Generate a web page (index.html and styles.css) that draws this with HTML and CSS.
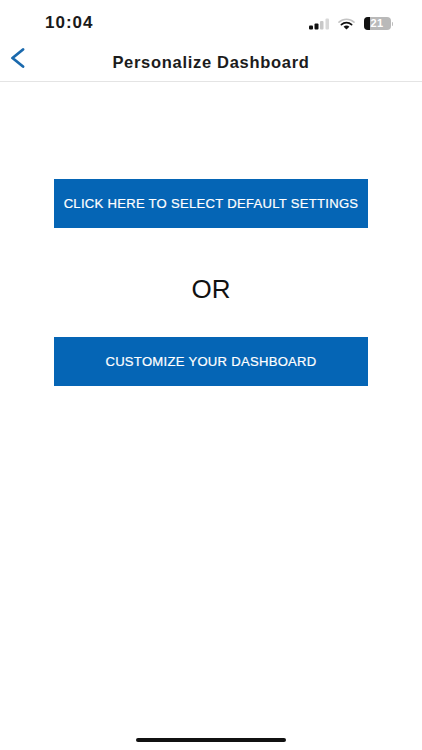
FILE: index.html
```html
<!DOCTYPE html>
<html lang="en">
<head>
<meta charset="utf-8">
<title>Personalize Dashboard</title>
<link rel="stylesheet" href="styles.css">
</head>
<body>
<div class="screen">
  <div class="status">
    <span class="time">10:04</span>
    <div class="status-icons">
      <svg class="signal" width="21" height="12" viewBox="0 0 21 12">
        <rect x="0" y="7.5" width="4" height="4" rx="1" fill="#111"/>
        <rect x="5.5" y="5.5" width="4" height="6" rx="1" fill="#111"/>
        <rect x="11" y="3" width="3.5" height="8.5" rx="1" fill="#c8c8c8"/>
        <rect x="16.5" y="0.5" width="3.5" height="11" rx="1" fill="#d8d8d8"/>
      </svg>
      <svg class="wifi" width="17" height="12" viewBox="0 0 17 12">
        <path d="M1 4.2a11 11 0 0 1 15 0" fill="none" stroke="#c4c4c4" stroke-width="1.6" stroke-linecap="round"/>
        <path d="M3.4 6.6a7.4 7.4 0 0 1 10.2 0" fill="none" stroke="#111" stroke-width="1.7" stroke-linecap="round"/>
        <path d="M5.6 8.8a4 4 0 0 1 5.8 0L8.5 11.6z" fill="#111"/>
      </svg>
      <div class="battery">
        <div class="battery-body"><span class="battery-fill"></span><span class="battery-num">21</span></div>
        <span class="battery-cap"></span>
      </div>
    </div>
  </div>
  <header class="nav">
    <svg class="back" width="15" height="20" viewBox="0 0 15 20">
      <path d="M13 1.5 2.5 10 13 18.5" fill="none" stroke="#1a69ad" stroke-width="2.8" stroke-linecap="round" stroke-linejoin="round"/>
    </svg>
    <h1 class="title">Personalize Dashboard</h1>
  </header>
  <main class="content">
    <button class="action">CLICK HERE TO SELECT DEFAULT SETTINGS</button>
    <p class="or">OR</p>
    <button class="action">CUSTOMIZE YOUR DASHBOARD</button>
  </main>
  <div class="home-indicator"></div>
</div>
</body>
</html>
```
FILE: styles.css
```css
* { box-sizing: border-box; }
html, body { margin: 0; padding: 0; background: #fff; }
body { font-family: "Liberation Sans", Arial, sans-serif; color: #111; }
.screen { width: 422px; height: 750px; display: flex; flex-direction: column; overflow: hidden; }
.status { height: 44px; padding: 14px 29px 0 45px; display: flex; justify-content: space-between; align-items: flex-start; }
.time { font-size: 17px; line-height: 18px; font-weight: 700; letter-spacing: 1px; color: #1a1a1a; }
.status-icons { display: flex; align-items: center; gap: 8px; padding-top: 3px; }
.battery { display: flex; align-items: center; gap: 1px; margin-left: 1px; }
.battery-body { position: relative; width: 27px; height: 13px; border-radius: 4px; background: #b9b9b9; overflow: hidden; }
.battery-fill { position: absolute; left: 0; top: 0; bottom: 0; width: 6px; background: #111; }
.battery-num { position: absolute; left: 0; right: 0; top: 0; text-align: center; font-size: 11px; line-height: 13px; font-weight: 700; color: #fff; letter-spacing: 0.5px; }
.battery-cap { width: 1.5px; height: 4px; border-radius: 0 1px 1px 0; background: #bdbdbd; }
.nav { height: 38px; border-bottom: 1px solid #e4e4e4; display: flex; align-items: center; justify-content: center; position: relative; padding-bottom: 1px; }
.back { position: absolute; left: 10px; top: 4px; }
.title { margin: 0; font-size: 16.5px; line-height: 20px; font-weight: 700; letter-spacing: 0.7px; color: #1c1c1c; }
.content { flex: 1; display: flex; flex-direction: column; align-items: center; padding-top: 97px; }
.action { width: 313.5px; height: 49px; border: 0; padding: 0; background: #0565b5; color: #fff; font-family: inherit; font-size: 13.1px; font-weight: 400; letter-spacing: 0.27px; -webkit-text-stroke: 0.2px #fff; }
.or { margin: 0; height: 109px; padding-top: 13px; display: flex; align-items: center; justify-content: center; font-size: 26px; color: #111; }
.home-indicator { width: 150px; height: 4px; border-radius: 2px; background: #111; margin: 0 auto 8px; flex: none; }
```
